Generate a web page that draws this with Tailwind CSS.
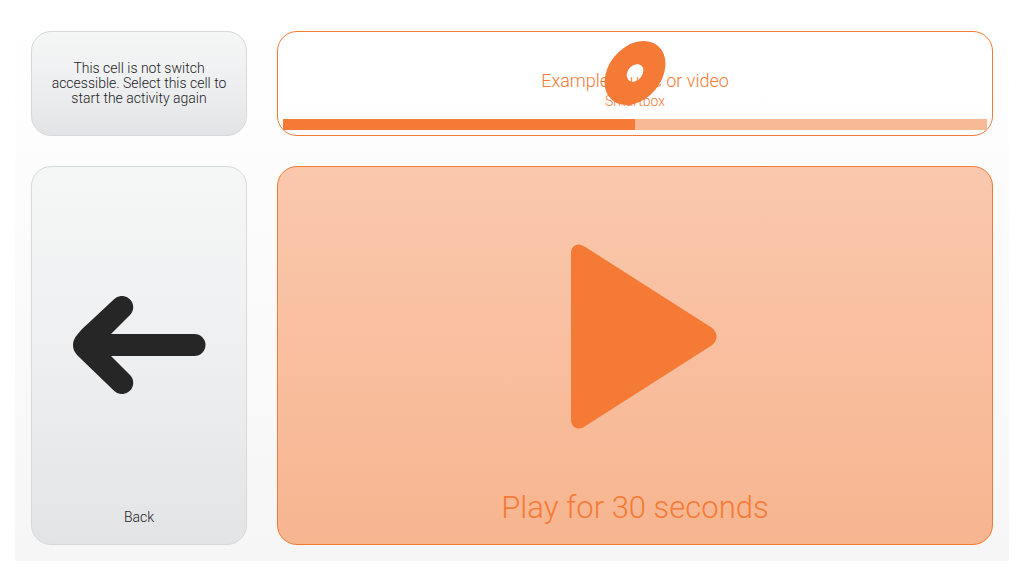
<!DOCTYPE html>
<html lang="en">
<head>
    <meta charset="UTF-8">
    <meta name="viewport" content="width=device-width, initial-scale=1.0">
    <title>Play for 30 seconds</title>
    <script src="https://cdn.jsdelivr.net/npm/@tailwindcss/browser@4"></script>
</head>
<body class="bg-white font-['Roboto',sans-serif] font-light text-[#1c1c1c]">
    <div class="flex min-h-screen p-[15px]">
        <!-- Grid of cells -->
        <main class="grid flex-1 grid-cols-[216px_1fr] grid-rows-[105px_1fr] gap-[30px] bg-linear-to-b from-white to-[#f6f6f6] p-4">
            <!-- Restart cell -->
            <button type="button" class="rounded-[20px] border border-[#d5d9dc] bg-linear-to-b from-[#f5f7f6] via-[#eeeff1] to-[#e3e4e6] px-4 text-center text-sm leading-[15px]">
                This cell is not switch accessible. Select this cell to start the activity again
            </button>

            <!-- Now playing -->
            <section class="relative flex flex-col rounded-[20px] border border-[#f57a35] bg-white/60 px-[5px] pb-[5px] text-center text-[#f57a35]">
                <div class="flex flex-1 flex-col justify-end pb-2.5">
                    <h1 class="text-lg leading-6">Example music or video</h1>
                    <p class="text-sm leading-4">Smartbox</p>
                </div>
                <div class="h-[11px] bg-[#f8ba96]" role="progressbar" aria-label="Playback" aria-valuenow="50" aria-valuemin="0" aria-valuemax="100">
                    <div class="h-full bg-[#f57a35]" style="width: 50%"></div>
                </div>
                <!-- Spinning disc -->
                <svg class="absolute inset-x-0 top-[5px] mx-auto size-[72px]" viewBox="-36 -36 72 72" fill="currentColor" aria-hidden="true">
                    <path transform="rotate(-50)" fill-rule="evenodd" d="M-35.5 0a35.5 26.3 0 1 0 71 0a35.5 26.3 0 1 0-71 0zM-9.7 0a9.7 7.3 0 1 0 19.4 0a9.7 7.3 0 1 0-19.4 0z"/>
                </svg>
            </section>

            <!-- Back -->
            <button type="button" class="flex flex-col items-center rounded-[20px] border border-[#d5d9dc] bg-linear-to-b from-[#f5f7f6] via-[#eeeff1] to-[#e3e4e6] pb-[19px] text-sm leading-4">
                <span class="flex flex-1 items-center pt-3.5">
                    <svg class="h-[98px] w-[133px]" viewBox="0 0 133 98" fill="#262626" aria-hidden="true">
                        <path d="M0 49C0 45 1.500 42 4 39C7 35 10 32 14 28.500L41 3.300A11 11 0 0 1 57 19L38 38H121.500A11 11 0 0 1 121.500 60H38L57 79A11 11 0 0 1 41 94.700L5 60C1.500 56.500 0 53 0 49Z"/>
                    </svg>
                </span>
                Back
            </button>

            <!-- Play -->
            <button type="button" class="flex flex-col items-center rounded-[20px] border border-[#f57a35] bg-linear-to-b from-[#fac8ad] to-[#f7b590] pb-[18px] text-[31px] leading-9 text-[#f57a35]">
                <span class="flex flex-1 items-center pt-4 pl-[18px]">
                    <svg class="h-[185px] w-[146px]" viewBox="0 0 146 185" fill="currentColor" aria-hidden="true">
                        <path d="M0 10C0 4 3 .5 7.500 .5C10 .5 12 1.500 14 2.800L140.500 83.500C144 86 145.500 89 145.500 92.500C145.500 96 144 99 140.500 101.500L14 182.200C12 183.500 10 184.500 7.500 184.500C3 184.500 0 181 0 175Z"/>
                    </svg>
                </span>
                Play for 30 seconds
            </button>
        </main>
    </div>
</body>
</html>
